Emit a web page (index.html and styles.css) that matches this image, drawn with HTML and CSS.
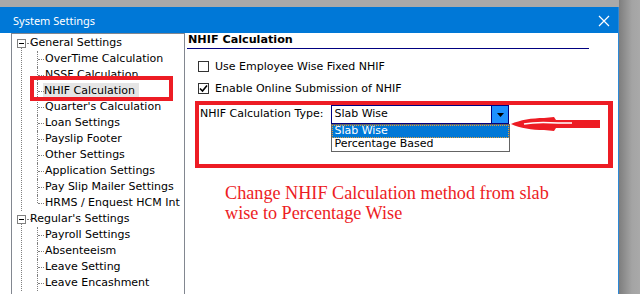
FILE: index.html
```html
<!DOCTYPE html>
<html lang="en">
<head>
    <meta charset="UTF-8">
    <title>System Settings</title>
    <link rel="stylesheet" href="styles.css">
</head>
<body>
    <div class="window">
        <div class="titlebar">
            <span class="title">System Settings</span>
            <svg class="close" width="12" height="12" viewBox="0 0 12 12">
                <path d="M1 1 L11 11 M11 1 L1 11" stroke="#fff" stroke-width="1.2"/>
            </svg>
        </div>

        <div class="content">
            <!-- Settings tree -->
            <div class="tree">
                <div class="root">
                    <div class="row root-row"><span class="expander"></span>General Settings</div>
                    <div class="group">
                        <div class="row child">OverTime Calculation</div>
                        <div class="row child">NSSF Calculation</div>
                        <div class="row child"><span class="selected">NHIF Calculation</span></div>
                        <div class="row child">Quarter's Calculation</div>
                        <div class="row child">Loan Settings</div>
                        <div class="row child">Payslip Footer</div>
                        <div class="row child">Other Settings</div>
                        <div class="row child">Application Settings</div>
                        <div class="row child">Pay Slip Mailer Settings</div>
                        <div class="row child">HRMS / Enquest HCM Int</div>
                    </div>
                </div>
                <div class="root">
                    <div class="row root-row"><span class="expander"></span>Regular's Settings</div>
                    <div class="group open">
                        <div class="row child">Payroll Settings</div>
                        <div class="row child">Absenteeism</div>
                        <div class="row child">Leave Setting</div>
                        <div class="row child">Leave Encashment</div>
                    </div>
                </div>
                <div class="mark tree-mark"></div>
            </div>

            <!-- NHIF settings panel -->
            <div class="panel">
                <div class="panel-title">NHIF Calculation</div>

                <label class="check"><span class="box"></span>Use Employee Wise Fixed NHIF</label>
                <label class="check"><span class="box checked">
                    <svg width="9" height="9" viewBox="0 0 9 9"><path d="M1 4.5 L3.5 7 L8 1.5" stroke="#000" stroke-width="1.6" fill="none"/></svg>
                </span>Enable Online Submission of NHIF</label>

                <div class="calc-box">
                    <div class="calc-row">
                        <span class="calc-label">NHIF Calculation Type:</span>
                        <div class="combo">
                            <div class="combo-field">
                                <span class="combo-value">Slab Wise</span>
                                <span class="combo-button">
                                    <svg width="7" height="4" viewBox="0 0 7 4"><path d="M0 0 H7 L3.5 4 Z" fill="#000"/></svg>
                                </span>
                            </div>
                            <div class="combo-list">
                                <div class="option active">Slab Wise</div>
                                <div class="option">Percentage Based</div>
                            </div>
                        </div>
                        <svg class="arrow" width="92" height="18" viewBox="0 0 92 18">
                            <path d="M1 9 C10 5 22 3 34 3 L44 2 L46 5 L90 5 L90 13 L46 13 L44 16 L34 15 C22 15 10 13 1 9 Z" fill="#ed1c24"/>
                            <path d="M14 9 C24 7 34 7 48 8 L62 8" stroke="#fff" stroke-width="1.5" fill="none"/>
                        </svg>
                    </div>
                </div>

                <p class="note">Change NHIF Calculation method from slab wise to Percentage Wise</p>
            </div>
        </div>
    </div>
</body>
</html>
```

FILE: styles.css
```css
body {
    margin: 0;
    height: 294px;
    overflow: hidden;
    background: linear-gradient(to right, #a9a9a9 0, #a9a9a9 619px, #7e7e7e 619px, #a4a4a4 632px, #a9a9a9 640px);
    font-family: 'DejaVu Sans', sans-serif;
    font-size: 11px;
    color: #000;
}

.window {
    margin-top: 7px;
    width: 618px;
    height: 287px;
    background-color: #fff;
    border-right: 1px solid #2b88d8;
}

.titlebar {
    height: 26px;
    background-color: #0078d7;
    display: flex;
    align-items: center;
    justify-content: space-between;
    padding: 0 8px 0 13px;
    box-sizing: border-box;
}

.title {
    font-family: 'Noto Sans', sans-serif;
    font-size: 11px;
    color: #fff;
}

.close {
    margin-top: 1px;
}

.content {
    display: flex;
    height: 261px;
    padding-left: 11px;
}

/* Tree */
.tree {
    position: relative;
    width: 172px;
    flex-shrink: 0;
    border: 1px solid #828790;
    border-bottom: none;
    padding-top: 1px;
    overflow: hidden;
    white-space: nowrap;
}

.root {
    position: relative;
}

.root::before {
    content: '';
    position: absolute;
    left: 9px;
    top: 12px;
    bottom: 0;
    border-left: 1px dotted #808080;
}

.row {
    position: relative;
    height: 16px;
    line-height: 16px;
}

.root-row {
    padding-left: 18px;
}

.expander {
    position: absolute;
    left: 5px;
    top: 4px;
    width: 7px;
    height: 7px;
    border: 1px solid #808080;
    background: #fff;
    z-index: 1;
}

.expander::before {
    content: '';
    position: absolute;
    left: 1px;
    top: 3px;
    width: 5px;
    height: 1px;
    background: #000;
}

.expander::after {
    content: '';
    position: absolute;
    left: 9px;
    top: 3px;
    width: 6px;
    border-top: 1px dotted #808080;
}

.child {
    padding-left: 33px;
}

.child::before {
    content: '';
    position: absolute;
    left: 25px;
    top: 0;
    height: 16px;
    border-left: 1px dotted #808080;
}

.group .child:last-child::before {
    height: 8px;
}

.group.open .child:last-child::before {
    height: 16px;
}

.child::after {
    content: '';
    position: absolute;
    left: 26px;
    top: 8px;
    width: 6px;
    border-top: 1px dotted #808080;
}

.selected {
    display: inline-block;
    background-color: #e5e5e5;
    padding: 0 4px 0 1px;
    margin-left: -2px;
}

.mark {
    position: absolute;
    border: 4px solid #ed1c24;
}

.tree-mark {
    left: 18px;
    top: 42px;
    width: 135px;
    height: 17px;
}

/* Right panel */
.panel {
    flex: 1;
    padding-left: 2px;
    padding-right: 29px;
}

.panel-title {
    font-weight: bold;
    font-size: 11.2px;
    height: 15px;
    line-height: 14px;
    padding-left: 1px;
    border-bottom: 1px solid #000080;
}

.check {
    display: flex;
    align-items: center;
    height: 11px;
    margin-left: 11px;
    margin-top: 12px;
    gap: 6px;
}

.check + .check {
    margin-top: 11px;
}

.box {
    width: 9px;
    height: 9px;
    border: 1px solid #333;
    display: flex;
    align-items: center;
    justify-content: center;
}

.calc-box {
    margin: 7px -24px 0 8px;
    height: 59px;
    border: 4px solid #ed1c24;
    border-right-width: 5px;
}

.calc-row {
    display: flex;
    align-items: flex-start;
    padding-left: 1px;
}

.calc-label {
    line-height: 17px;
    margin-right: 8px;
}

.combo {
    width: 178px;
    position: relative;
    z-index: 1;
}

.combo-field {
    display: flex;
    height: 17px;
    border: 1px solid #000080;
    border-right: none;
}

.combo-value {
    flex: 1;
    line-height: 16px;
    padding-left: 2px;
}

.combo-button {
    width: 16px;
    background-color: #1e90ff;
    border-left: 1px solid #000080;
    border-right: 1px solid #000080;
    display: flex;
    align-items: center;
    justify-content: center;
}

.combo-list {
    border: 1px solid #646464;
    margin-right: -1px;
}

.option {
    height: 13px;
    line-height: 12px;
    padding-left: 2px;
}

.option.active {
    background-color: #0078d7;
    color: #fff;
    outline: 1px dotted #e0a040;
    outline-offset: -1px;
}

.arrow {
    margin-top: 10px;
    margin-left: 1px;
}

.note {
    margin: 15px 0 0 38px;
    font-family: 'Liberation Serif', serif;
    font-size: 18.2px;
    line-height: 20px;
    color: #ed1c24;
    width: 345px;
}
```
